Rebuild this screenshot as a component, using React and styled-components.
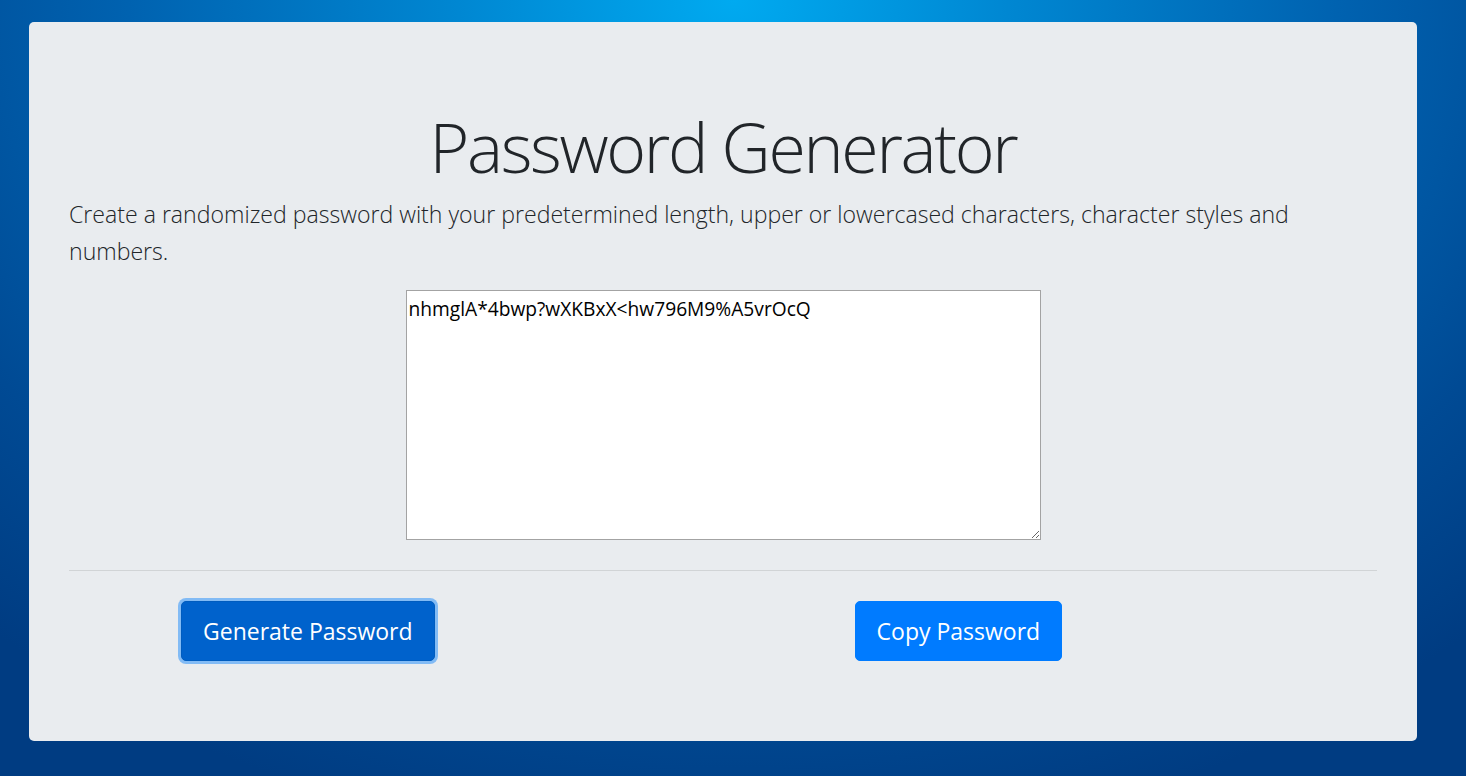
import React, { useState } from 'react';
import styled, { createGlobalStyle } from 'styled-components';

const GlobalStyle = createGlobalStyle`
	html, body {
		margin: 0;
		padding: 0;
		height: 100%;
	}
	body {
		font-family: "Open Sans", "Noto Sans", sans-serif;
		color: #212529;
		background: radial-gradient(ellipse 75% 110% at 50% 0%, #00aaf0 0%, #0087d2 25%, #0062b0 55%, #004a94 80%, #003c82 100%);
		background-attachment: fixed;
	}
`;

const Page = styled.div`
	min-height: 776px;
	box-sizing: border-box;
	padding: 22px 49px 35px 29px;
`;

const Jumbotron = styled.div`
	background: #e9ecef;
	border-radius: 5px;
	padding: 82px 40px 78px;
	box-sizing: border-box;
	height: 719px;
`;

const Title = styled.h1`
	margin: 0 0 6px;
	text-align: center;
	font-weight: 300;
	font-size: 68px;
	line-height: 86px;
	color: #212529;
	letter-spacing: -2.3px;
`;

const Lead = styled.p`
	margin: 0 0 20px;
	font-size: 23.1px;
	font-weight: 300;
	line-height: 37px;
	color: #212529;
`;

const PasswordArea = styled.textarea`
	display: block;
	margin: 0 auto;
	width: 635px;
	height: 250px;
	box-sizing: border-box;
	border: 1px solid #a3a3a3;
	padding: 4px 2px;
	font-family: "Open Sans", "Noto Sans", sans-serif;
	font-size: 19.2px;
	color: #000;
	background: #fff;
	resize: both;
	outline: none;
`;

const Divider = styled.hr`
	margin: 30px 0 30px;
	border: 0;
	border-top: 1px solid rgba(0, 0, 0, 0.1);
`;

const ButtonRow = styled.div`
	display: flex;
	padding-left: 112px;
	gap: 420px;
`;

const Button = styled.button`
	font-family: "Open Sans", "Noto Sans", sans-serif;
	font-size: 23px;
	line-height: 36px;
	padding: 11px 21px;
	border: 1px solid ${p => (p.$active ? '#005cbf' : '#007bff')};
	border-radius: 5px;
	color: #fff;
	background: ${p => (p.$active ? '#0062cc' : '#007bff')};
	box-shadow: ${p => (p.$active ? '0 0 0 3px rgba(130, 187, 245, 1)' : 'none')};
	cursor: pointer;
`;

export default function App() {
	const [password] = useState('nhmglA*4bwp?wXKBxX<hw796M9%A5vrOcQ');

	return (
		<Page>
			<GlobalStyle />
			<Jumbotron>
				<Title>Password Generator</Title>
				<Lead>
					Create a randomized password with your predetermined length, upper or lowercased characters, character styles and numbers.
				</Lead>
				<PasswordArea readOnly value={password} />
				<Divider />
				<ButtonRow>
					<Button $active>Generate Password</Button>
					<Button>Copy Password</Button>
				</ButtonRow>
			</Jumbotron>
		</Page>
	);
}
